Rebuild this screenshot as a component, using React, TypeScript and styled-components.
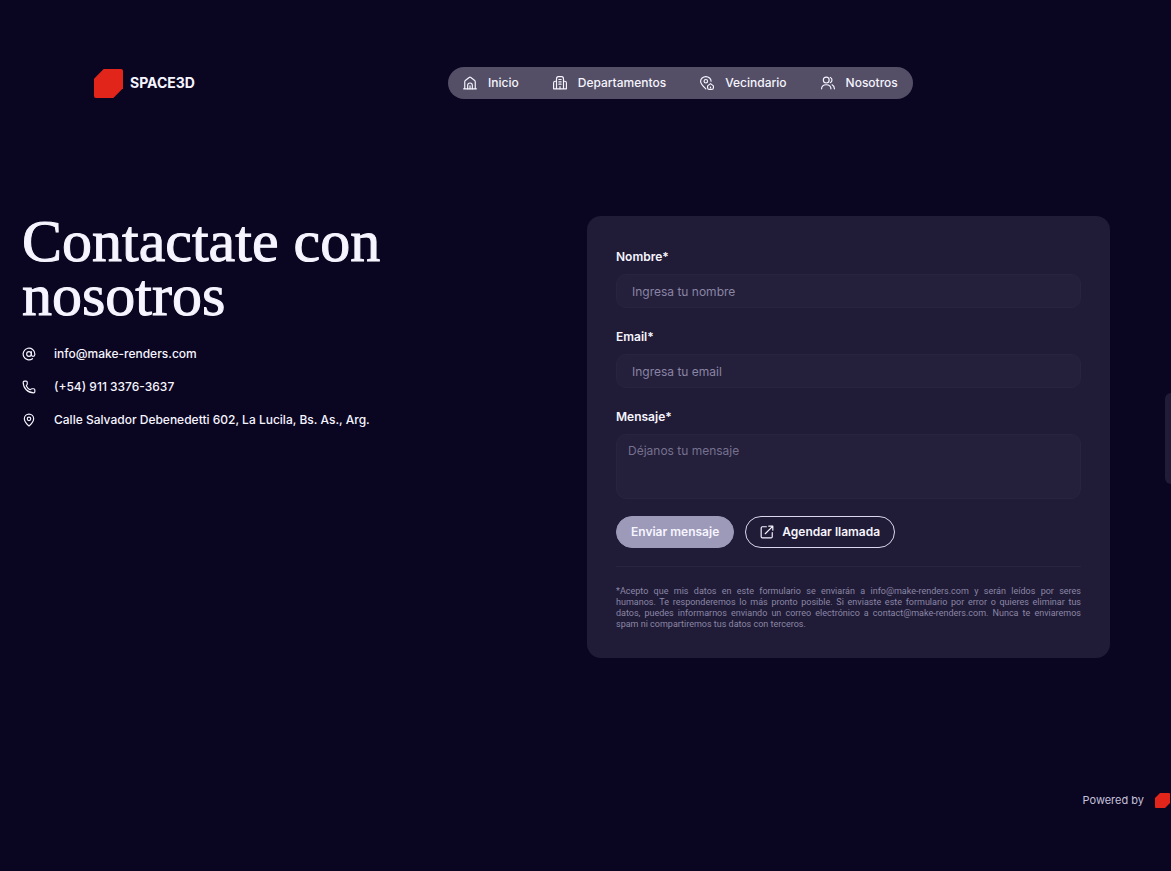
import React from "react";
import styled, { createGlobalStyle } from "styled-components";
import { AtSign, MapPin, Phone } from "lucide-react";

const GlobalStyle = createGlobalStyle`
  *, *::before, *::after { box-sizing: border-box; }
  body {
    margin: 0;
    background: #0a0521;
    color: #f6f5ff;
    font-family: Inter, "Liberation Sans", sans-serif;
    font-size: 12px;
    line-height: 20px;
  }
  a { color: inherit; text-decoration: none; }
`;

const Page = styled.div`
  position: relative;
  display: flex;
  flex-direction: column;
  min-height: 100vh;
  overflow: hidden;
`;

const Header = styled.header`
  display: grid;
  grid-template-columns: 354px max-content;
  align-items: center;
  padding: 67px 0 0 94px;
`;

const Brand = styled.a`
  display: flex;
  align-items: center;
  gap: 7px;
  font-size: 14px;
  font-weight: 700;
`;

const Nav = styled.nav`
  display: flex;
  align-items: center;
  gap: 34px;
  height: 32px;
  padding: 0 15px;
  border-radius: 16px;
  background: #544f66;
`;

const NavLink = styled.a`
  display: flex;
  align-items: center;
  gap: 11px;
  font-weight: 500;
`;

const Main = styled.main`
  display: grid;
  grid-template-columns: 1fr 1fr;
  gap: 42px;
  align-items: start;
  padding: 115px 61px 0 22px;
`;

const Title = styled.h1`
  margin: 0 0 22px;
  font-family: "Liberation Serif", serif;
  font-size: 60px;
  font-weight: 400;
  line-height: 54px;
  -webkit-text-stroke: 1px currentColor;
`;

const ContactList = styled.address`
  display: flex;
  flex-direction: column;
  gap: 13px;
  font-style: normal;
  font-weight: 500;
`;

const ContactItem = styled.a`
  display: flex;
  align-items: center;
  gap: 18px;
`;

const Card = styled.form`
  margin-top: 2px;
  padding: 29px 29px 28px;
  border-radius: 14px;
  background: #201b36;
`;

const Field = styled.div`
  display: flex;
  flex-direction: column;
  gap: 5px;
  margin-bottom: 17px;
`;

const Label = styled.label`
  font-weight: 600;
  line-height: 24px;
`;

const Input = styled.input`
  height: 34px;
  padding: 0 15px;
  border: 1px solid #28233f;
  border-radius: 10px;
  outline: none;
  background: #241f3b;
  color: inherit;
  font: inherit;
  &::placeholder { color: #8985a3; opacity: 1; }
`;

const TextArea = styled.textarea`
  height: 65px;
  padding: 6px 11px;
  border: 1px solid #28233f;
  border-radius: 10px;
  outline: none;
  resize: none;
  background: #241f3b;
  color: inherit;
  font: inherit;
  &::placeholder { color: #75718e; opacity: 1; }
`;

const Actions = styled.div`
  display: flex;
  gap: 11px;
  padding-bottom: 18px;
  border-bottom: 1px solid #28233f;
`;

const Button = styled.button<{ $outlined?: boolean }>`
  display: flex;
  align-items: center;
  gap: 8px;
  height: 32px;
  padding: 0 14px;
  border: 1px solid ${(p) => (p.$outlined ? "#d9d7ee" : "#9c99b9")};
  border-radius: 16px;
  background: ${(p) => (p.$outlined ? "transparent" : "#9c99b9")};
  color: #f6f5ff;
  font: inherit;
  font-weight: 600;
  white-space: nowrap;
`;

const FinePrint = styled.p`
  margin: 19px 0 0;
  color: #8b87a6;
  font-family: Roboto, sans-serif;
  font-size: 9px;
  line-height: 11px;
`;

const FineLine = styled.span`
  display: block;
  text-align: justify;
  text-align-last: justify;
  &:last-child { text-align-last: left; }
`;

const SideTab = styled.button`
  position: absolute;
  top: 393px;
  right: 0;
  width: 6px;
  height: 91px;
  padding: 0;
  border: 0;
  border-radius: 6px 0 0 6px;
  background: #201b36;
`;

const Footer = styled.footer`
  display: flex;
  justify-content: flex-end;
  align-items: center;
  gap: 11px;
  margin-top: auto;
  padding: 40px 1px 61px 0;
  color: #c5c2dc;
  font-size: 11px;
`;

const Logo = ({ size }: { size: number }) => (
  <svg width={size} height={size} viewBox="0 0 30 30" aria-hidden="true">
    <path d="M10 0H28Q30 0 30 2V20L20 30H2Q0 30 0 28V10Z" fill="#e1251b" />
  </svg>
);

const Icon = ({ children }: { children: React.ReactNode }) => (
  <svg
    width="14"
    height="14"
    viewBox="0 0 24 24"
    fill="none"
    stroke="currentColor"
    strokeWidth="2"
    strokeLinecap="round"
    strokeLinejoin="round"
    aria-hidden="true"
  >
    {children}
  </svg>
);

const HomeIcon = () => (
  <Icon>
    <path d="M1 22H23M3 22V10Q3 8.4 4 7.7L10.5 2.6Q12 1.5 13.5 2.6L20 7.7Q21 8.4 21 10V22" />
    <path d="M8 22V16Q8 12 12 12Q16 12 16 16V22M12 17V22" />
  </Icon>
);

const BuildingIcon = () => (
  <Icon>
    <path d="M1 22H23M6 22V5Q6 1 9 1H15Q18 1 18 5V22M6 9H4Q1 9 1 12V22M18 9H20Q23 9 23 12V22" />
    <path d="M10 6H14M10 10H14M10 14H14M12 18V22" />
  </Icon>
);

const AreaIcon = () => (
  <Icon>
    <path d="M10 22C6 18 1 14 1 9A9 8 0 0 1 19 9" />
    <circle cx="10" cy="9" r="3" />
    <path d="M13 17L18 13L23 17V20Q23 23 20 23H16Q13 23 13 20ZM18 19V20" />
  </Icon>
);

const PeopleIcon = () => (
  <Icon>
    <circle cx="9" cy="7" r="5" />
    <path d="M16 2.5A5 5 0 0 1 16 11.5M1 22Q1 15 9 15Q17 15 17 22M19 15Q23 17 23 22" />
  </Icon>
);

const ExternalIcon = () => (
  <Icon>
    <path d="M11 3H4Q2 3 2 5V20Q2 22 4 22H19Q21 22 21 20V13M9 15L22 2M15 2H22V9" />
  </Icon>
);

const links = [
  { text: "Inicio", icon: <HomeIcon /> },
  { text: "Departamentos", icon: <BuildingIcon /> },
  { text: "Vecindario", icon: <AreaIcon /> },
  { text: "Nosotros", icon: <PeopleIcon /> },
];

const contacts = [
  { text: "info@make-renders.com", href: "mailto:info@make-renders.com", icon: <AtSign size={14} /> },
  { text: "(+54) 911 3376-3637", href: "tel:+5491133763637", icon: <Phone size={14} /> },
  { text: "Calle Salvador Debenedetti 602, La Lucila, Bs. As., Arg.", href: "#mapa", icon: <MapPin size={14} /> },
];

const finePrint = [
  "*Acepto que mis datos en este formulario se enviarán a info@make-renders.com y serán leídos por seres",
  "humanos. Te responderemos lo más pronto posible. Si enviaste este formulario por error o quieres eliminar tus",
  "datos, puedes informarnos enviando un correo electrónico a contact@make-renders.com. Nunca te enviaremos",
  "spam ni compartiremos tus datos con terceros.",
];

export default function App() {
  return (
    <Page>
      <GlobalStyle />
      <Header>
        <Brand href="#inicio">
          <Logo size={29} />
          SPACE3D
        </Brand>
        <Nav>
          {links.map((l) => (
            <NavLink key={l.text} href={`#${l.text.toLowerCase()}`}>
              {l.icon}
              {l.text}
            </NavLink>
          ))}
        </Nav>
      </Header>
      <Main>
        <section>
          <Title>
            Contactate con
            <br />
            nosotros
          </Title>
          <ContactList>
            {contacts.map((c) => (
              <ContactItem key={c.text} href={c.href}>
                {c.icon}
                {c.text}
              </ContactItem>
            ))}
          </ContactList>
        </section>
        <Card>
          <Field>
            <Label htmlFor="nombre">Nombre*</Label>
            <Input id="nombre" type="text" placeholder="Ingresa tu nombre" />
          </Field>
          <Field>
            <Label htmlFor="email">Email*</Label>
            <Input id="email" type="email" placeholder="Ingresa tu email" />
          </Field>
          <Field>
            <Label htmlFor="mensaje">Mensaje*</Label>
            <TextArea id="mensaje" placeholder="Déjanos tu mensaje" />
          </Field>
          <Actions>
            <Button type="submit">Enviar mensaje</Button>
            <Button type="button" $outlined>
              <ExternalIcon />
              Agendar llamada
            </Button>
          </Actions>
          <FinePrint>
            {finePrint.map((line) => (
              <FineLine key={line}>{line} </FineLine>
            ))}
          </FinePrint>
        </Card>
      </Main>
      <SideTab type="button" aria-label="Abrir panel" />
      <Footer>
        Powered by
        <Logo size={15} />
      </Footer>
    </Page>
  );
}
